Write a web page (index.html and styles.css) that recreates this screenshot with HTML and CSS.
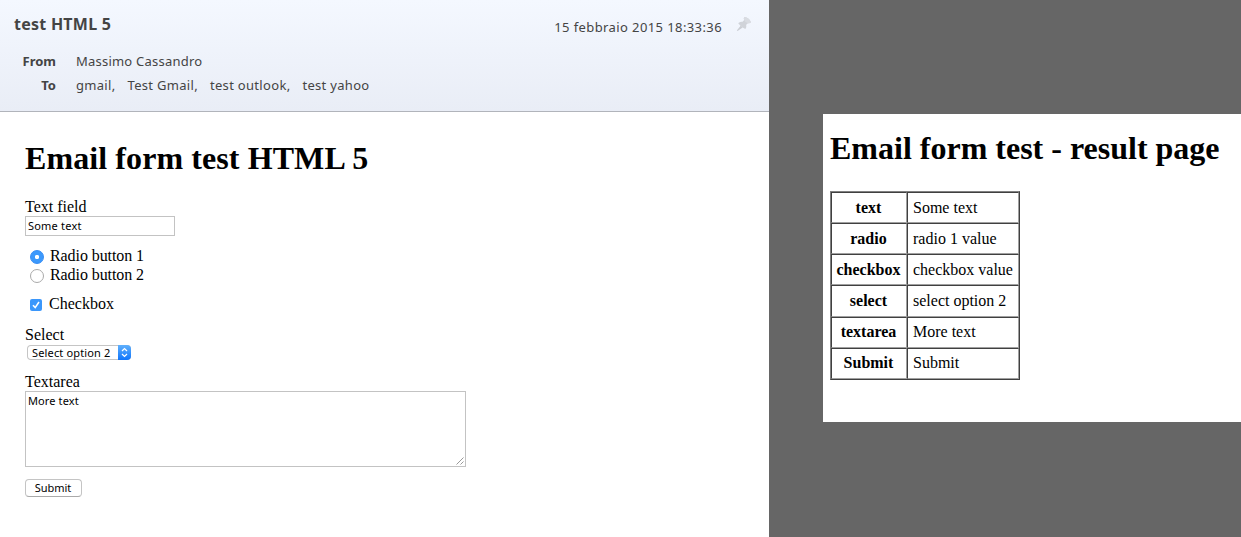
FILE: index.html
```html
<!DOCTYPE html>
<html lang="en">
<head>
<meta charset="utf-8">
<title>test HTML 5</title>
<link rel="stylesheet" href="styles.css">
</head>
<body>
<main class="mail">
  <header class="mail-header">
    <div class="subject-row">
      <h2 class="subject">test HTML 5</h2>
      <span class="date">15 febbraio 2015 18:33:36</span>
      <svg class="pin" viewBox="0 0 16 16" width="16" height="16"><path d="M.8 14.4 4.6 9.8 6.6 11.4 1.6 15z" fill="#cbced4"/><path d="M2.2 7.2Q4.5 5.4 6.6 5.8L8.2 3.9Q7.2 2.2 8.4 1Q12.8 1.4 15 6.2Q13.9 7.6 12 7.2L10.2 8.8Q10.8 11 9.4 13Q5 11.5 2.2 7.2z" fill="#d0d3d9"/><path d="M8.4 1Q12.8 1.4 15 6.2Q13.9 7.6 12 7.2Q9 6 8.2 3.9Q7.2 2.2 8.4 1z" fill="#d9dce2"/></svg>
    </div>
    <dl class="people">
      <dt>From</dt><dd><span class="from">Massimo Cassandro</span></dd>
      <dt>To</dt><dd class="to"><span>gmail,</span><span>Test Gmail,</span><span>test outlook,</span><span>test yahoo</span></dd>
    </dl>
  </header>
  <form class="form">
    <h1 class="title">Email form test HTML 5</h1>
    <div class="field">
      <label class="label" for="t">Text field</label>
      <input class="text" id="t" type="text" value="Some text">
    </div>
    <div class="choices">
      <label class="choice"><input class="radio" type="radio" name="r" checked>Radio button 1</label>
      <label class="choice"><input class="radio" type="radio" name="r">Radio button 2</label>
    </div>
    <label class="choice check-row"><span class="check"><svg viewBox="0 0 12 12" width="12" height="12"><path d="M3 6.3 5.2 8.6 9 3" fill="none" stroke="#fff" stroke-width="1.6"/></svg></span>Checkbox</label>
    <div class="field select-field">
      <span class="label">Select</span>
      <div class="select"><span>Select option 2</span><svg class="arrows" viewBox="0 0 13 15" width="13" height="15"><path d="M4 6 6.5 3.5 9 6M4 9 6.5 11.5 9 9" fill="none" stroke="#fff" stroke-width="1.2"/></svg></div>
    </div>
    <div class="field area-field">
      <label class="label" for="a">Textarea</label>
      <div class="area-wrap">
        <textarea class="area" id="a">More text</textarea>
        <svg class="grip" viewBox="0 0 8 8" width="8" height="8"><path d="M.5 7.5 7.5.5M4.5 7.5 7.5 4.5" stroke="#999" fill="none"/></svg>
      </div>
    </div>
    <button class="submit" type="button">Submit</button>
  </form>
</main>
<aside class="backdrop">
  <section class="result">
    <h1 class="result-title">Email form test - result page</h1>
    <table class="values">
      <tr><th>text</th><td>Some text</td></tr>
      <tr><th>radio</th><td>radio 1 value</td></tr>
      <tr><th>checkbox</th><td>checkbox value</td></tr>
      <tr><th>select</th><td>select option 2</td></tr>
      <tr><th>textarea</th><td>More text</td></tr>
      <tr><th>Submit</th><td>Submit</td></tr>
    </table>
  </section>
</aside>
</body>
</html>
```
FILE: styles.css
```css
* { box-sizing: border-box; }
body {
  margin: 0;
  height: 537px;
  display: flex;
  overflow: hidden;
  background: #666;
  color: #000;
  font: 16px/19px "Liberation Serif", "Times New Roman", serif;
}
.mail { width: 769px; background: #fff; }
.mail-header {
  height: 112px;
  padding: 12px 17px 0 14px;
  border-bottom: 1px solid #b1b4bb;
  background: linear-gradient(#f4f8ff, #e9edf6);
  color: #444;
  font-family: "Noto Sans", sans-serif;
}
.subject-row { display: flex; height: 37px; }
.subject { margin: 0; flex: 1; font-size: 16px; line-height: 24px; letter-spacing: .25px; }
.date { font-size: 13px; line-height: 31px; letter-spacing: .4px; }
.pin { margin: 4px 0 0 14px; }
.people {
  display: grid;
  grid-template-columns: 42px 1fr;
  grid-auto-rows: 24px;
  column-gap: 20px;
  margin: 0;
  font-size: 13px;
  line-height: 24px;
}
.people dt { text-align: right; font-weight: bold; }
.people dd { margin: 0; letter-spacing: .22px; }
.people .to { display: flex; gap: 12px; letter-spacing: .31px; }
.form { display: flex; flex-direction: column; align-items: flex-start; padding: 28px 25px 0; }
.title, .result-title { margin: 0; font-size: 32px; line-height: 36px; white-space: nowrap; }
.title { letter-spacing: .09px; }
.field { display: flex; flex-direction: column; align-items: flex-start; }
.title + .field { margin-top: 22px; }
.label { line-height: 18px; }
.text, .area, .select, .submit { font: 11px/13px "Noto Sans", sans-serif; color: #000; }
.text { width: 150px; height: 20px; padding: 0 2px 2px; border: 1px solid #c3c3c3; letter-spacing: .2px; }
.choices { margin-top: 10px; }
.choice { display: flex; align-items: center; height: 19px; letter-spacing: -.08px; }
.check-row { letter-spacing: 0; }
.radio {
  appearance: none;
  width: 14px;
  height: 14px;
  margin: 2px 6px 0 5px;
  border: 1px solid #aaa;
  border-radius: 50%;
  background: #fff;
}
.radio:checked { border-color: #348cf5; background: radial-gradient(circle, #fff 0 1.8px, #3c99fc 2.5px); }
.check-row { margin-top: 10px; }
.check { width: 12px; height: 12px; margin: 2px 7px 0 5px; border-radius: 2px; background: #3b97fb; }
.check svg { display: block; }
.select-field { margin-top: 13px; }
.select {
  display: flex;
  justify-content: space-between;
  width: 104px;
  height: 15px;
  margin: 1px 0 0 2px;
  padding-left: 5px;
  border-radius: 4px;
  overflow: hidden;
  box-shadow: inset 0 0 0 1px #c5c5c5;
  line-height: 15px;
  letter-spacing: .15px;
  white-space: nowrap;
}
.arrows { background: linear-gradient(#60b0fc, #0f75fb); }
.area-field { margin-top: 13px; }
.area-wrap { position: relative; width: 441px; height: 76px; }
.area { display: block; width: 100%; height: 100%; padding: 2px; border: 1px solid #c3c3c3; resize: none; letter-spacing: .12px; }
.grip { position: absolute; right: 2px; bottom: 2px; }
.submit {
  width: 57px;
  height: 18px;
  margin-top: 12px;
  padding: 0 1px 2px 0;
  border: 1px solid #c4c4c4;
  border-bottom-color: #aaa;
  border-radius: 4px;
  background: #fff;
}
.backdrop { flex: 1; padding: 114px 0 0 54px; }
.result { height: 308px; padding: 16px 0 0 7px; background: #fff; }
.values {
  width: 190px;
  height: 189px;
  margin-top: 25px;
  border: 1px solid;
  border-color: #808080 #404040 #404040 #808080;
  border-spacing: 0;
  table-layout: fixed;
}
.values th, .values td { padding: 0 4px 1px 5px; border: 1px solid; border-color: #404040 #a0a0a0 #a0a0a0 #404040; white-space: nowrap; }
.values th { width: 76px; padding: 0 5px 1px 4px; }
```
